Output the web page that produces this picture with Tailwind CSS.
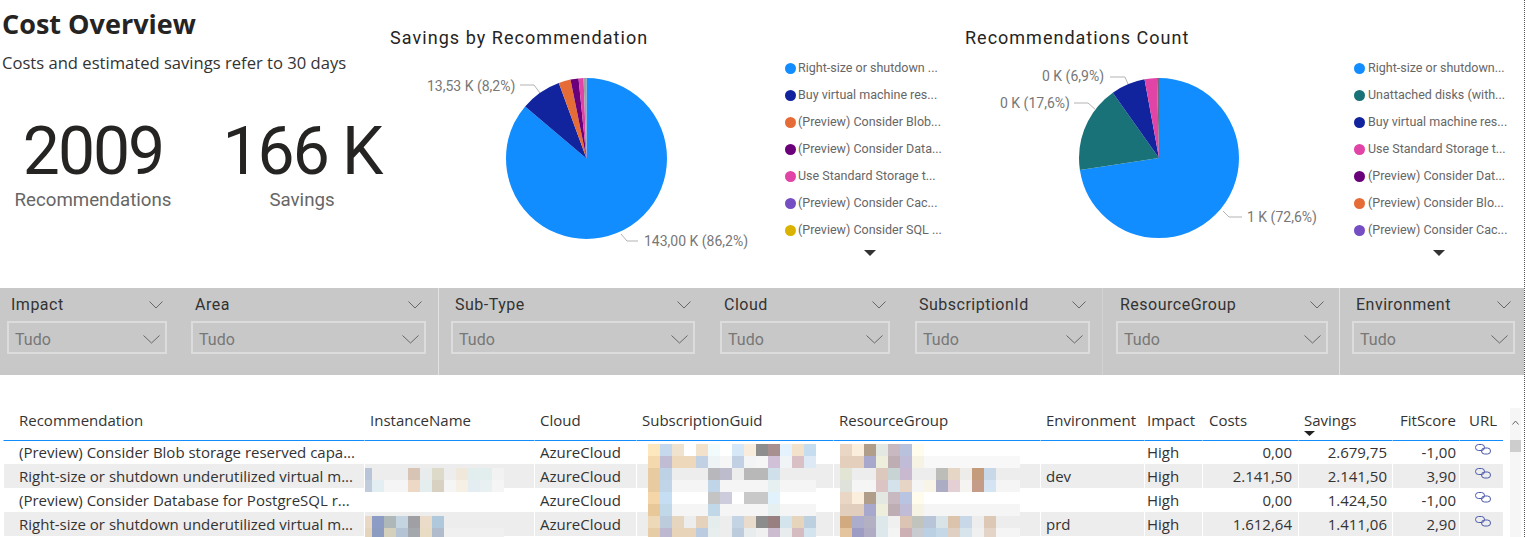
<!DOCTYPE html>
<html lang="en">
<head>
  <meta charset="UTF-8" />
  <title>Cost Overview</title>
  <script src="https://cdn.jsdelivr.net/npm/@tailwindcss/browser@4"></script>
</head>

<body class="w-[1527px] h-[537px] overflow-hidden bg-white font-['Open_Sans',sans-serif] text-[#333]">
  <div class="relative w-[1525px] h-[537px] border-r border-dotted border-[#555]">

    <!-- Top: title, KPIs and pies -->
    <div class="flex h-[288px]">
      <div class="w-[390px] pl-[2px]">
        <h1 class="pt-[6px] text-[27px] leading-[36px] font-bold text-[#252423]">Cost Overview</h1>
        <p class="mt-[9px] text-[16.6px] leading-[24px] text-[#333]">Costs and estimated savings refer to 30 days</p>
        <div class="flex mt-[41px] font-['Roboto',sans-serif]">
          <div class="w-[182px] shrink-0 text-center">
            <div class="text-[66px] leading-[72px] text-[#252423] tracking-[-2px]">2009</div>
            <div class="text-[18.7px] leading-[24px] text-[#666]">Recommendations</div>
          </div>
          <div class="w-[236px] shrink-0 text-center">
            <div class="text-[66px] leading-[72px] text-[#252423] tracking-[-2px]">166 K</div>
            <div class="text-[18.7px] leading-[24px] text-[#666]">Savings</div>
          </div>
        </div>
      </div>

      <!-- Savings by Recommendation -->
      <div class="w-[575px] font-['Roboto',sans-serif]">
        <h2 class="pt-[27px] h-[60px] text-[18px] leading-[22px] tracking-[1.05px] text-[#252423]">Savings by Recommendation</h2>
        <div class="flex">
          <svg class="w-[395px] h-[200px] shrink-0" viewBox="0 0 395 200">
            <g fill="none" stroke-width="80.5" transform="rotate(-90 196.5 98.5)">
              <circle cx="196.5" cy="98.5" r="40.25" pathLength="100" stroke="#118dff" stroke-dasharray="86.2 13.8" />
              <circle cx="196.5" cy="98.5" r="40.25" pathLength="100" stroke="#12239e" stroke-dasharray="8.2 91.8" stroke-dashoffset="-86.2" />
              <circle cx="196.5" cy="98.5" r="40.25" pathLength="100" stroke="#e66c37" stroke-dasharray="2.4 97.6" stroke-dashoffset="-94.4" />
              <circle cx="196.5" cy="98.5" r="40.25" pathLength="100" stroke="#6b007b" stroke-dasharray="1.6 98.4" stroke-dashoffset="-96.8" />
              <circle cx="196.5" cy="98.5" r="40.25" pathLength="100" stroke="#e044a7" stroke-dasharray="1 99" stroke-dashoffset="-98.4" />
              <circle cx="196.5" cy="98.5" r="40.25" pathLength="100" stroke="#a0a0a0" stroke-dasharray="0.6 99.4" stroke-dashoffset="-99.4" />
            </g>
            <polyline points="130,25 144,25 150,33" fill="none" stroke="#b3b3b3" />
            <polyline points="231,174 237,181 248,181" fill="none" stroke="#b3b3b3" />
            <text x="37" y="31" font-size="14" fill="#777">13,53 K (8,2%)</text>
            <text x="254" y="186" font-size="14" fill="#777">143,00 K (86,2%)</text>
          </svg>
          <ul class="text-[12.5px] text-[#666] -mt-[5px]">
            <li class="flex items-center h-[27px] gap-[2px]"><span class="w-[11px] h-[11px] rounded-full bg-[#118dff]"></span>Right-size or shutdown ...</li>
            <li class="flex items-center h-[27px] gap-[2px]"><span class="w-[11px] h-[11px] rounded-full bg-[#12239e]"></span>Buy virtual machine res...</li>
            <li class="flex items-center h-[27px] gap-[2px]"><span class="w-[11px] h-[11px] rounded-full bg-[#e66c37]"></span>(Preview) Consider Blob...</li>
            <li class="flex items-center h-[27px] gap-[2px]"><span class="w-[11px] h-[11px] rounded-full bg-[#6b007b]"></span>(Preview) Consider Data...</li>
            <li class="flex items-center h-[27px] gap-[2px]"><span class="w-[11px] h-[11px] rounded-full bg-[#e044a7]"></span>Use Standard Storage t...</li>
            <li class="flex items-center h-[27px] gap-[2px]"><span class="w-[11px] h-[11px] rounded-full bg-[#744ec2]"></span>(Preview) Consider Cac...</li>
            <li class="flex items-center h-[27px] gap-[2px]"><span class="w-[11px] h-[11px] rounded-full bg-[#d9b300]"></span>(Preview) Consider SQL ...</li>
            <li class="pt-[6px] pl-[79px]"><svg class="w-[12px] h-[6px]" viewBox="0 0 12 6"><path d="M0 0H12L6 6Z" fill="#333" /></svg></li>
          </ul>
        </div>
      </div>

      <!-- Recommendations Count -->
      <div class="flex-1 font-['Roboto',sans-serif]">
        <h2 class="pt-[27px] h-[60px] text-[18px] leading-[22px] tracking-[1px] text-[#252423]">Recommendations Count</h2>
        <div class="flex">
          <svg class="w-[389px] h-[200px] shrink-0" viewBox="0 0 389 200">
            <g fill="none" stroke-width="80" transform="rotate(-90 194 98)">
              <circle cx="194" cy="98" r="40" pathLength="100" stroke="#118dff" stroke-dasharray="72.6 27.4" />
              <circle cx="194" cy="98" r="40" pathLength="100" stroke="#197278" stroke-dasharray="17.6 82.4" stroke-dashoffset="-72.6" />
              <circle cx="194" cy="98" r="40" pathLength="100" stroke="#12239e" stroke-dasharray="6.9 93.1" stroke-dashoffset="-90.2" />
              <circle cx="194" cy="98" r="40" pathLength="100" stroke="#e044a7" stroke-dasharray="2.5 97.5" stroke-dashoffset="-97.1" />
              <circle cx="194" cy="98" r="40" pathLength="100" stroke="#6b6b80" stroke-dasharray="0.4 99.6" stroke-dashoffset="-99.6" />
            </g>
            <polyline points="145,17 160,17 163,24" fill="none" stroke="#b3b3b3" />
            <polyline points="109,43 123,43 131,50" fill="none" stroke="#b3b3b3" />
            <polyline points="258,151 264,157 277,157" fill="none" stroke="#b3b3b3" />
            <text x="77" y="21" font-size="14" fill="#777">0 K (6,9%)</text>
            <text x="35" y="48" font-size="14" fill="#777">0 K (17,6%)</text>
            <text x="282" y="162" font-size="14" fill="#777">1 K (72,6%)</text>
          </svg>
          <ul class="text-[12.5px] text-[#666] -mt-[5px]">
            <li class="flex items-center h-[27px] gap-[3px]"><span class="w-[11px] h-[11px] rounded-full bg-[#118dff]"></span>Right-size or shutdown...</li>
            <li class="flex items-center h-[27px] gap-[3px]"><span class="w-[11px] h-[11px] rounded-full bg-[#197278]"></span>Unattached disks (with...</li>
            <li class="flex items-center h-[27px] gap-[3px]"><span class="w-[11px] h-[11px] rounded-full bg-[#12239e]"></span>Buy virtual machine res...</li>
            <li class="flex items-center h-[27px] gap-[3px]"><span class="w-[11px] h-[11px] rounded-full bg-[#e044a7]"></span>Use Standard Storage t...</li>
            <li class="flex items-center h-[27px] gap-[3px]"><span class="w-[11px] h-[11px] rounded-full bg-[#6b007b]"></span>(Preview) Consider Dat...</li>
            <li class="flex items-center h-[27px] gap-[3px]"><span class="w-[11px] h-[11px] rounded-full bg-[#e66c37]"></span>(Preview) Consider Blo...</li>
            <li class="flex items-center h-[27px] gap-[3px]"><span class="w-[11px] h-[11px] rounded-full bg-[#744ec2]"></span>(Preview) Consider Cac...</li>
            <li class="pt-[6px] pl-[79px]"><svg class="w-[12px] h-[6px]" viewBox="0 0 12 6"><path d="M0 0H12L6 6Z" fill="#333" /></svg></li>
          </ul>
        </div>
      </div>
    </div>

    <!-- Slicers -->
    <div class="flex h-[87px] bg-[#c8c8c8] font-['Roboto',sans-serif]">
      <div class="flex w-[439px] pl-[7px] gap-[24px] border-r border-[#e2e2e2]">
        <div class="w-[160px]">
          <div class="flex items-center justify-between h-[33px] px-[4px] text-[16px] tracking-[0.5px] text-[#333]">Impact<svg class="w-[14px] h-[8px]" viewBox="0 0 14 8"><path d="M0.5 0.5L7 7L13.5 0.5" fill="none" stroke="#666" /></svg></div>
          <div class="flex items-center justify-between h-[33px] pl-[6px] pr-[5px] pt-[4px] border-2 border-[#dcdcdc] text-[16px] text-[#777]">Tudo<svg class="w-[17px] h-[9px]" viewBox="0 0 17 9"><path d="M0.5 0.5L8.5 8L16.5 0.5" fill="none" stroke="#666" /></svg></div>
        </div>
        <div class="w-[235px]">
          <div class="flex items-center justify-between h-[33px] px-[4px] text-[16px] tracking-[0.5px] text-[#333]">Area<svg class="w-[14px] h-[8px]" viewBox="0 0 14 8"><path d="M0.5 0.5L7 7L13.5 0.5" fill="none" stroke="#666" /></svg></div>
          <div class="flex items-center justify-between h-[33px] pl-[6px] pr-[5px] pt-[4px] border-2 border-[#dcdcdc] text-[16px] text-[#777]">Tudo<svg class="w-[17px] h-[9px]" viewBox="0 0 17 9"><path d="M0.5 0.5L8.5 8L16.5 0.5" fill="none" stroke="#666" /></svg></div>
        </div>
      </div>
      <div class="flex w-[664px] pl-[12px] gap-[25px] border-r border-[#d2d2d2]">
        <div class="w-[244px]">
          <div class="flex items-center justify-between h-[33px] px-[4px] text-[16px] tracking-[0.5px] text-[#333]">Sub-Type<svg class="w-[14px] h-[8px]" viewBox="0 0 14 8"><path d="M0.5 0.5L7 7L13.5 0.5" fill="none" stroke="#666" /></svg></div>
          <div class="flex items-center justify-between h-[33px] pl-[6px] pr-[5px] pt-[4px] border-2 border-[#dcdcdc] text-[16px] text-[#777]">Tudo<svg class="w-[17px] h-[9px]" viewBox="0 0 17 9"><path d="M0.5 0.5L8.5 8L16.5 0.5" fill="none" stroke="#666" /></svg></div>
        </div>
        <div class="w-[170px]">
          <div class="flex items-center justify-between h-[33px] px-[4px] text-[16px] tracking-[0.5px] text-[#333]">Cloud<svg class="w-[14px] h-[8px]" viewBox="0 0 14 8"><path d="M0.5 0.5L7 7L13.5 0.5" fill="none" stroke="#666" /></svg></div>
          <div class="flex items-center justify-between h-[33px] pl-[6px] pr-[5px] pt-[4px] border-2 border-[#dcdcdc] text-[16px] text-[#777]">Tudo<svg class="w-[17px] h-[9px]" viewBox="0 0 17 9"><path d="M0.5 0.5L8.5 8L16.5 0.5" fill="none" stroke="#666" /></svg></div>
        </div>
        <div class="w-[175px]">
          <div class="flex items-center justify-between h-[33px] px-[4px] text-[16px] tracking-[0.5px] text-[#333]">SubscriptionId<svg class="w-[14px] h-[8px]" viewBox="0 0 14 8"><path d="M0.5 0.5L7 7L13.5 0.5" fill="none" stroke="#666" /></svg></div>
          <div class="flex items-center justify-between h-[33px] pl-[6px] pr-[5px] pt-[4px] border-2 border-[#dcdcdc] text-[16px] text-[#777]">Tudo<svg class="w-[17px] h-[9px]" viewBox="0 0 17 9"><path d="M0.5 0.5L8.5 8L16.5 0.5" fill="none" stroke="#666" /></svg></div>
        </div>
      </div>
      <div class="w-[237px] pl-[13px] border-r border-[#e2e2e2]">
        <div class="w-[212px]">
          <div class="flex items-center justify-between h-[33px] px-[4px] text-[16px] tracking-[0.5px] text-[#333]">ResourceGroup<svg class="w-[14px] h-[8px]" viewBox="0 0 14 8"><path d="M0.5 0.5L7 7L13.5 0.5" fill="none" stroke="#666" /></svg></div>
          <div class="flex items-center justify-between h-[33px] pl-[6px] pr-[5px] pt-[4px] border-2 border-[#dcdcdc] text-[16px] text-[#777]">Tudo<svg class="w-[17px] h-[9px]" viewBox="0 0 17 9"><path d="M0.5 0.5L8.5 8L16.5 0.5" fill="none" stroke="#666" /></svg></div>
        </div>
      </div>
      <div class="flex-1 pl-[12px]">
        <div class="w-[163px]">
          <div class="flex items-center justify-between h-[33px] px-[4px] text-[16px] tracking-[0.5px] text-[#333]">Environment<svg class="w-[14px] h-[8px]" viewBox="0 0 14 8"><path d="M0.5 0.5L7 7L13.5 0.5" fill="none" stroke="#666" /></svg></div>
          <div class="flex items-center justify-between h-[33px] pl-[6px] pr-[5px] pt-[4px] border-2 border-[#dcdcdc] text-[16px] text-[#777]">Tudo<svg class="w-[17px] h-[9px]" viewBox="0 0 17 9"><path d="M0.5 0.5L8.5 8L16.5 0.5" fill="none" stroke="#666" /></svg></div>
        </div>
      </div>
    </div>

    <!-- Table -->
    <div id="grid" class="relative h-[162px] pt-[33px] pl-[3px] overflow-hidden text-[15px] text-[#333]">
      <table class="table-fixed w-[1500px] border-separate border-spacing-0">
        <colgroup>
          <col class="w-[361px]" /><col class="w-[170px]" /><col class="w-[102px]" /><col class="w-[197px]" /><col class="w-[207px]" /><col class="w-[104px]" /><col class="w-[58px]" /><col class="w-[96px]" /><col class="w-[94px]" /><col class="w-[67px]" /><col class="w-[44px]" />
        </colgroup>
        <thead>
          <tr class="h-[33px] text-left [&>th]:font-normal [&>th]:pb-[7px] [&>th]:border-b [&>th]:border-b-[#118dff] [&>th]:border-l [&>th]:border-l-white">
            <th class="pl-[15px]">Recommendation</th>
            <th class="pl-[5px]">InstanceName</th>
            <th class="pl-[5px]">Cloud</th>
            <th class="pl-[5px]">SubscriptionGuid</th>
            <th class="pl-[5px]">ResourceGroup</th>
            <th class="pl-[5px]">Environment</th>
            <th class="pl-[2px]">Impact</th>
            <th class="pl-[6px]">Costs</th>
            <th class="pl-[5px] relative">Savings<svg class="absolute left-[5px] top-[23px] w-[11px] h-[5px]" viewBox="0 0 11 5"><path d="M0 0H11L5.5 5Z" fill="#222" /></svg></th>
            <th class="pl-[7px]">FitScore</th>
            <th class="pl-[9px]">URL</th>
          </tr>
        </thead>
        <tbody class="[&_td]:whitespace-nowrap [&_td]:border-l [&_td]:border-white">
          <tr class="h-[23px]">
            <td class="pl-[15px]">(Preview) Consider Blob storage reserved capa...</td><td></td><td class="pl-[5px]">AzureCloud</td><td></td><td></td><td></td><td class="pl-[2px]">High</td>
            <td class="pr-[6px] text-right">0,00</td><td class="pr-[5px] text-right">2.679,75</td><td class="pr-[3px] text-right">-1,00</td>
            <td class="pl-[15px]"><svg class="w-[16px] h-[11px] -mt-[6px]" viewBox="0 0 16 11" fill="none" stroke="#4a5aa8"><rect x="0.5" y="0.5" width="9" height="6" rx="3" /><rect x="6.5" y="4" width="9" height="6" rx="3" /></svg></td>
          </tr>
          <tr class="h-[24px] bg-[#eeeded]">
            <td class="pl-[15px]">Right-size or shutdown underutilized virtual m...</td><td></td><td class="pl-[5px]">AzureCloud</td><td></td><td></td><td class="pl-[5px]">dev</td><td class="pl-[2px]">High</td>
            <td class="pr-[6px] text-right">2.141,50</td><td class="pr-[5px] text-right">2.141,50</td><td class="pr-[3px] text-right">3,90</td>
            <td class="pl-[15px]"><svg class="w-[16px] h-[11px] -mt-[6px]" viewBox="0 0 16 11" fill="none" stroke="#4a5aa8"><rect x="0.5" y="0.5" width="9" height="6" rx="3" /><rect x="6.5" y="4" width="9" height="6" rx="3" /></svg></td>
          </tr>
          <tr class="h-[24px]">
            <td class="pl-[15px]">(Preview) Consider Database for PostgreSQL r...</td><td></td><td class="pl-[5px]">AzureCloud</td><td></td><td></td><td></td><td class="pl-[2px]">High</td>
            <td class="pr-[6px] text-right">0,00</td><td class="pr-[5px] text-right">1.424,50</td><td class="pr-[3px] text-right">-1,00</td>
            <td class="pl-[15px]"><svg class="w-[16px] h-[11px] -mt-[6px]" viewBox="0 0 16 11" fill="none" stroke="#4a5aa8"><rect x="0.5" y="0.5" width="9" height="6" rx="3" /><rect x="6.5" y="4" width="9" height="6" rx="3" /></svg></td>
          </tr>
          <tr class="h-[24px] bg-[#eeeded]">
            <td class="pl-[15px]">Right-size or shutdown underutilized virtual m...</td><td></td><td class="pl-[5px]">AzureCloud</td><td></td><td></td><td class="pl-[5px]">prd</td><td class="pl-[2px]">High</td>
            <td class="pr-[6px] text-right">1.612,64</td><td class="pr-[5px] text-right">1.411,06</td><td class="pr-[3px] text-right">2,90</td>
            <td class="pl-[15px]"><svg class="w-[16px] h-[11px] -mt-[6px]" viewBox="0 0 16 11" fill="none" stroke="#4a5aa8"><rect x="0.5" y="0.5" width="9" height="6" rx="3" /><rect x="6.5" y="4" width="9" height="6" rx="3" /></svg></td>
          </tr>
        </tbody>
      </table>

      <!-- Scrollbar -->
      <div class="absolute left-[1510px] top-[33px] w-[11px] h-[129px] bg-[#f6f6f6]">
        <svg class="mx-auto mt-[12px] w-[7px] h-[5px]" viewBox="0 0 7 5"><path d="M0.5 4.5L3.5 1L6.5 4.5" fill="none" stroke="#666" /></svg>
        <div class="mt-[15px] h-[12px] bg-[#cdcdcd]"></div>
      </div>

      <!-- Redacted values, pixelated in the source screenshot -->
      <div id="mosaic-instance" class="absolute left-[365px] top-[93px]"></div>
      <div id="mosaic-sub" class="absolute left-[648px] top-[69px]"></div>
      <div id="mosaic-rg" class="absolute left-[840px] top-[69px]"></div>
    </div>
  </div>

  <script>
    const mosaics = {
      'mosaic-sub': [
        'FDE7BE C6D8EC EFE2CE FFFFFF F2E2CC F2FBFC FFFFFF D6E8F8 F8ECDD 8E8E8E A89090 E3F2FC F2E2CC C6DDF0',
        'F4D9AE BFBCD4 EDD8BC EDD8BC C2D0E4 EEF4F6 F6F6F6 C2D0E4 F2F4F6 F6F6F6 D0C0D8 F0F4F6 D8C0C4 DDEAF6',
        'E8CBA0 BDD2E4 EEEDED EEEDED EEEDED B8B8BC BCBCCC EEEDED B8B8B8 B8B8B8 D0E0EA EEEDED EEEDED EEEDED',
        'E8CBA0 C0D6E8 F5F5F5 F5F5F5 F5F5F5 C0D6E8 F5F5F5 F5F5F5 F5F5F5 F5F5F5 E6F0F0 F5F5F5 F5F5F5 F5F5F5',
        'F4D6A8 C6DEF4 FFFFFF FFFFFF FFFFFF C4C4C4 CCCCDC FFFFFF C8C8C8 C8C8C8 E2F2FC FFFFFF FFFFFF FFFFFF',
        'E8C898 C0D8E8 F5F5F5 F5F5F5 F5F5F5 C0D8E8 F5F5F5 F5F5F5 F5F5F5 F5F5F5 E6F0F0 F5F5F5 F5F5F5 F5F5F5',
        'EDD8B8 BCCCDC E6D6C0 EEEDED E4D2BC E4ECEC EEEDED C4D4E4 EADCCC 8C8C8C 988080 D4E4EC E6D4BC BCD0E0',
        'E6CDA8 BCB8D0 E8D4B8 E8D4B8 BCCCE0 E8EEEE EEEDED BCCCDC E8ECEC F0F0F0 CCBCD0 E8ECEC D4BCC0 D4E4EE'
      ],
      'mosaic-rg': [
        'EAD6C4 FBEEDD B09E8A E4E8E2 C8B8C0 B8C2DC FFFCEE FFFFFF FFFFFF FFFFFF FFFFFF FFFFFF FFFFFF FFFFFF FFFFFF',
        'E4CEBC E4CEBC A8A8CC EEEEDC BEAEB4 C0BCD8 F6F2E4 F8F8F8 F8F8F8 F8F8F8 F8F8F8 F8F8F8 F8F8F8 F8F8F8 F8F8F8',
        'E2E4D4 EEEDED EEEDED DCC8BC C8D4D4 C8B8D0 EEEDED EEEDED BCBCB8 E6D6C6 EEECE8 C49C7C C8D8E8 EEEDED EEEDED',
        'DEE2DA F5F5F5 F5F5F5 DCC4C4 D4E2EC E6D4C4 F5F5F5 F8F4E8 ACACC4 E4D0D4 F6F4F0 C49C88 D4E4F2 F5F5F5 F5F5F5',
        'EAD6C4 FBEEDD B09E8A E4E8E2 C8B8C0 B8C4E0 FFFCEE FFFFFF FFFFFF FFFFFF FFFFFF FFFFFF FFFFFF FFFFFF FFFFFF',
        'E2CEBC E2CEBC A8A8CC EEEEDC BEAEB4 C0BCD8 F6F2E4 F5F5F5 F5F5F5 F5F5F5 F5F5F5 F5F5F5 F5F5F5 F5F5F5 F5F5F5',
        'D2AA80 ACACCC B4B0C4 DCE8EA F0F0F0 DCC4B4 C0C4BC B8C4D8 D8E4E8 DCC4AC C8D8E8 EEEDED DCC8B4 EEEDED EEEDED',
        'E4C49C 9C9CC4 B0ACC4 DCE8EC F4F4F4 CCB0B4 C8CCD0 BCD0E4 C4D8E8 E0D0C4 D8E4EC F0F0F0 E4D4C8 F5F5F5 F5F5F5'
      ],
      'mosaic-instance': [
        'B8C4D8 EEEDED EEEDED EEEDED D8C4B4 E8ECEC DEDACA EEEDED F0E8DA E2EEEE E2EEEE F2F2F2',
        'C0CCDC E2EEF2 F5F5F5 F5F5F5 ECD8C4 E4EEEE D8D0C0 F5F5F5 F6F0E4 E4EEF2 E8F0F2 F5F5F5',
        null,
        null,
        'E8D8C4 8C9CC4 AEB8B8 C4D4E0 A0A0A4 EADCC8 B0C8DC EEEDED EEEDED EEEDED EEEDED EEEDED',
        'E4D4BC 8C9CC0 D4D0BC B4C4D4 A4A8AC E8DCC4 B0BCCC F0F0F0 F0F0F0 F0F0F0 F0F0F0 F0F0F0'
      ]
    };

    for (const [id, rows] of Object.entries(mosaics)) {
      const box = document.getElementById(id);
      rows.forEach((row) => {
        const line = document.createElement('div');
        line.className = 'flex h-[12px]';
        (row || '').split(' ').filter(Boolean).forEach((hex, i) => {
          const cell = document.createElement('span');
          cell.className = 'block h-[12px]';
          // first block of the instance column is clipped by the cell edge
          cell.style.width = (id === 'mosaic-instance' && i === 0 ? 7 : 12) + 'px';
          cell.style.background = '#' + hex;
          line.appendChild(cell);
        });
        box.appendChild(line);
      });
    }
  </script>
</body>
</html>
